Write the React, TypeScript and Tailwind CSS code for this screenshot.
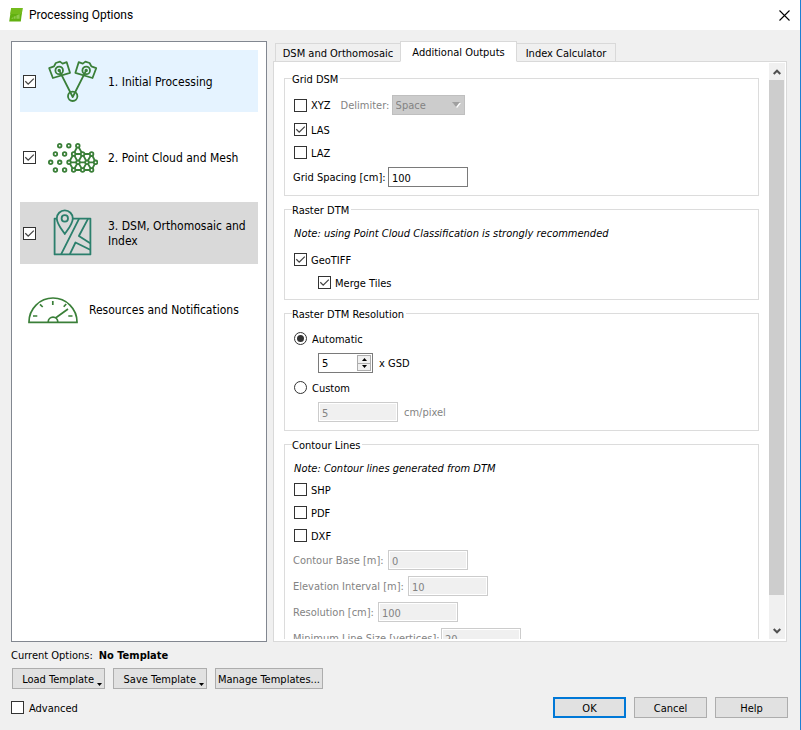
import { useState, type ReactNode } from "react";

function Tick({
  id,
  checked = false,
}: {
  id: string;
  checked?: boolean;
}) {
  return (
    <span className="grid size-[13px] shrink-0 place-items-center">
      <input
        id={id}
        type="checkbox"
        defaultChecked={checked}
        className="peer col-start-1 row-start-1 size-[13px] appearance-none border border-[#333333] bg-white"
      />
      <svg
        viewBox="0 0 13 13"
        aria-hidden="true"
        className="pointer-events-none invisible col-start-1 row-start-1 size-[13px] peer-checked:visible"
      >
        <path d="M2.3 6.3 5.2 9.2 10.8 3.6" fill="none" stroke="#444" strokeWidth="1.3" />
      </svg>
    </span>
  );
}

function CheckRow({ id, text, checked, indent }: { id: string; text: string; checked?: boolean; indent?: boolean }) {
  return (
    <div className={`flex h-[23px] items-center gap-1 ${indent ? "pl-[25px]" : "pl-px"}`}>
      <Tick id={id} checked={checked} />
      <label htmlFor={id} className="pt-0.5">
        {text}
      </label>
    </div>
  );
}

function RadioRow({ id, text, checked }: { id: string; text: string; checked?: boolean }) {
  return (
    <div className="flex h-[23px] items-center gap-[5px] pl-px">
      <span className="grid size-[13px] place-items-center">
        <input
          id={id}
          type="radio"
          name="resolution"
          defaultChecked={checked}
          className="peer col-start-1 row-start-1 size-[13px] appearance-none rounded-full border border-[#333333] bg-white"
        />
        <span className="pointer-events-none invisible col-start-1 row-start-1 size-[7px] rounded-full bg-[#333333] peer-checked:visible" />
      </span>
      <label htmlFor={id} className="pt-0.5">
        {text}
      </label>
    </div>
  );
}

const disabledBox =
  "h-5 w-20 shrink-0 border border-[#cccccc] bg-[#f0f0f0] px-[3px] pt-0.5 text-[#838383] shadow-[inset_0_0_0_1px_#ffffff]";

function DisabledField({ id, text, value, width }: { id: string; text: string; value: string; width: string }) {
  return (
    <div className="flex h-[26px] items-center text-[#838383]">
      <label htmlFor={id} className={`shrink-0 pt-0.5 whitespace-nowrap ${width}`}>
        {text}
      </label>
      <input id={id} type="text" disabled defaultValue={value} className={disabledBox} />
    </div>
  );
}

function Group({ title, children }: { title: string; children: ReactNode }) {
  return (
    <fieldset className="min-w-0 border border-[#dcdcdc] px-2 pt-[7px] pb-[5px]">
      <legend className="-ml-px h-[14px] pr-0.5 leading-[17px]">{title}</legend>
      {children}
    </fieldset>
  );
}

function Note({ children }: { children: ReactNode }) {
  return <p className="flex h-5 items-center pt-0.5 pl-px italic">{children}</p>;
}

function AppLogo() {
  return (
    <svg viewBox="0 0 14 14" className="size-[14px]" aria-hidden="true">
      <path d="M2.2 0H13.6L11.8 13.6H.2Z" fill="#62b010" />
      <path d="M2.2 0H13.6L12.8 6H1.3Z" fill="#74bb1c" />
      <path d="M2 10.8 4.2 9V10.8ZM4.8 10.8V8.4L6.6 8V10.8ZM7.4 10.8V7.4L10.6 6V10.8Z" fill="#8fca4c" />
    </svg>
  );
}

function CamerasIcon() {
  return (
    <svg viewBox="0 0 50 42" className="h-[42px] w-[50px]" fill="none" stroke="#3a7f38" strokeWidth="1.8" strokeLinejoin="round">
      <path d="M1.2 8.2 6 6.4 7.8 3 12 1.6 14.6 3.6 18.7 2.2 22 12.8 4.9 18Z" />
      <path d="M48.2 8.2 43.4 6.4 41.6 3 37.4 1.6 34.8 3.6 30.7 2.2 27.4 12.8 44.5 18Z" />
      <circle cx="11.2" cy="10.4" r="3.8" />
      <circle cx="38.2" cy="10.4" r="3.8" />
      <circle cx="11.2" cy="10.4" r=".8" />
      <circle cx="38.2" cy="10.4" r=".8" />
      <path d="M11.2 10.4 24.7 37 38.2 10.4" />
      <circle cx="24.7" cy="36.3" r="4.7" />
    </svg>
  );
}

const meshDots = [
  [11.7, 3.7], [20.8, 3.7], [29.8, 3.7],
  [7.4, 12], [16.6, 12], [25.6, 12], [34.6, 12], [43.6, 12],
  [2.7, 20.3], [11.7, 20.3], [21, 20.3], [30, 20.3], [39, 20.3], [47.6, 20.3],
  [7.4, 28], [16.6, 28], [25.6, 28], [34.6, 28], [43.6, 28],
];

function MeshIcon() {
  return (
    <svg viewBox="0 0 50 31" className="h-[31px] w-[50px]" fill="none" stroke="#3a7f38" strokeWidth="1.8">
      <path d="M25.6 12 29.8 3.7 34.6 12H25.6L21 20.3 25.6 28H43.6L47.6 20.3 43.6 12H34.6L30 20.3 25.6 12M21 20.3H47.6M25.6 28 30 20.3 34.6 28 39 20.3 43.6 28M34.6 12 39 20.3 43.6 12" />
      {meshDots.map(([x, y]) => (
        <circle key={`${x}-${y}`} cx={x} cy={y} r="1.8" fill="#fff" />
      ))}
    </svg>
  );
}

function MapIcon() {
  return (
    <svg viewBox="0 0 40 48" className="h-12 w-10" fill="none" stroke="#2b7f6c" strokeWidth="1.8" strokeLinejoin="round">
      <path d="M4 9.6H1.6V45.4H37.4V9.6H20" />
      <path d="M11.8 25C8 19.6 3.8 14.4 3.8 9.4A8 8 0 0 1 19.8 9.4C19.8 14.4 15.6 19.6 11.8 25Z" />
      <circle cx="11.8" cy="9.4" r="3.2" />
      <path d="M26 9.8 8.2 45.2M35 9.8 25.9 27 37.2 34.3M16.9 45.2 22.5 33.5 37.2 40.8" />
    </svg>
  );
}

function GaugeIcon() {
  return (
    <svg viewBox="0 0 50 30" className="h-[30px] w-[50px]" fill="none" stroke="#3a7f38" strokeWidth="1.7">
      <path d="M1 28.4V28A24 24 0 0 1 49 28V28.4Z" />
      <path d="M20.2 28A4.8 4.8 0 0 1 29.8 28M27.5 24 40 15M24.8 7V11M12 10.3 14.7 13M35.7 12.8 38.2 10M5 22H9.3M40.3 22H44.5" />
    </svg>
  );
}

function StepItem({
  id,
  text,
  icon,
  tone,
}: {
  id: string;
  text: string;
  icon: ReactNode;
  tone: string;
}) {
  return (
    <li className={`flex h-[62px] items-center pl-[3px] ${tone}`}>
      <Tick id={id} checked />
      <span className="flex w-[72px] shrink-0 justify-center pl-0.5">{icon}</span>
      <label htmlFor={id} className="min-w-0 flex-1 pt-0.5 pr-1">
        {text}
      </label>
    </li>
  );
}

const pushButton = "h-[21px] border border-[#adadad] bg-[#e1e1e1] text-center";

function MenuArrow() {
  return (
    <svg viewBox="0 0 5 3" className="mb-[2px] h-[3px] w-[5px] self-end" aria-hidden="true">
      <path d="M0 0H5L2.5 3Z" fill="#000" />
    </svg>
  );
}

const tabs = [
  { name: "DSM and Orthomosaic", width: "w-[126px]" },
  { name: "Additional Outputs", width: "w-[117px]" },
  { name: "Index Calculator", width: "w-[100px]" },
];

export default function App() {
  const [active, setActive] = useState(1);

  return (
    <div className="flex h-screen flex-col border-r border-[#1b7fd4] bg-[#f0f0f0] font-['DejaVu_Sans_Condensed','DejaVu_Sans',sans-serif] text-[11px] leading-[14px] text-black">
      <header className="flex h-[30px] shrink-0 items-center bg-white pr-[10px] pl-[9px]">
        <AppLogo />
        <h1 className="ml-1.5 flex-1 font-[Roboto,'Open_Sans',sans-serif] text-[12px]">Processing Options</h1>
        <button type="button" aria-label="Close" className="size-[11px]">
          <svg viewBox="0 0 11 11" className="size-[11px]" stroke="#000" strokeWidth="1.1">
            <path d="M.5 .5 10.5 10.5M10.5 .5 .5 10.5" />
          </svg>
        </button>
      </header>

      <main className="flex min-h-0 flex-1 gap-1.5 pt-[11px] pr-[13px] pl-[11px]">
        <nav className="w-64 shrink-0 border border-[#828790] bg-white p-2 text-[12px] leading-[15px]">
          <ul className="flex flex-col gap-[14px]">
            <StepItem id="step-1" text="1. Initial Processing" icon={<CamerasIcon />} tone="bg-[#e5f3ff]" />
            <StepItem id="step-2" text="2. Point Cloud and Mesh" icon={<MeshIcon />} tone="bg-white" />
            <StepItem id="step-3" text="3. DSM, Orthomosaic and Index" icon={<MapIcon />} tone="bg-[#d9d9d9]" />
            <li className="flex h-[62px] items-center gap-[11px] pl-2">
              <GaugeIcon />
              <span className="pt-0.5">Resources and Notifications</span>
            </li>
          </ul>
        </nav>

        <section className="flex min-w-0 flex-1 flex-col">
          <div role="tablist" className="z-10 -mb-px flex h-[21px] shrink-0 items-end pl-0.5">
            {tabs.map((tab, i) => (
              <button
                key={tab.name}
                type="button"
                role="tab"
                aria-selected={active === i}
                onClick={() => setActive(i)}
                className={`-mr-px border border-[#d9d9d9] pt-0.5 whitespace-nowrap ${tab.width} ${
                  active === i ? "z-10 h-[21px] border-b-white bg-white" : "h-[19px] bg-[#f0f0f0]"
                }`}
              >
                {tab.name}
              </button>
            ))}
          </div>

          <div className="flex min-h-0 flex-1 border border-[#d9d9d9] bg-white pt-px pr-px pb-0.5">
            <div className="flex min-w-0 flex-1 flex-col gap-1.5 overflow-hidden px-[10px] pt-2">
              <Group title="Grid DSM">
                <div className="flex h-[26px] items-center gap-1 pl-px">
                  <Tick id="xyz" />
                  <label htmlFor="xyz" className="pt-0.5">
                    XYZ
                  </label>
                  <label htmlFor="delimiter" className="ml-1.5 w-[47px] pt-0.5 text-[#838383]">
                    Delimiter:
                  </label>
                  <span className="grid items-center">
                    <select
                      id="delimiter"
                      disabled
                      className="col-start-1 row-start-1 h-5 w-[73px] appearance-none border border-[#bfbfbf] bg-[#cccccc] px-[3px] pt-0.5 text-[#838383] opacity-100"
                    >
                      <option>Space</option>
                    </select>
                    <svg viewBox="0 0 9 6" className="pointer-events-none col-start-1 row-start-1 mr-1 h-1.5 w-[9px] justify-self-end" aria-hidden="true">
                      <path d="M1 1H9L5 6Z" fill="#fff" />
                      <path d="M0 0H8L4 5Z" fill="#a0a0a0" />
                    </svg>
                  </span>
                </div>
                <CheckRow id="las" text="LAS" checked />
                <CheckRow id="laz" text="LAZ" />
                <div className="flex h-[26px] items-center">
                  <label htmlFor="grid-spacing" className="w-[95px] shrink-0 pt-0.5 whitespace-nowrap">
                    Grid Spacing [cm]:
                  </label>
                  <input id="grid-spacing" type="text" defaultValue="100" className="h-5 w-20 border border-[#7a7a7a] bg-white px-[3px] pt-0.5" />
                </div>
              </Group>

              <Group title="Raster DTM">
                <Note>Note: using Point Cloud Classification is strongly recommended</Note>
                <div className="pt-[5px]">
                  <CheckRow id="geotiff" text="GeoTIFF" checked />
                  <CheckRow id="merge" text="Merge Tiles" checked indent />
                </div>
              </Group>

              <Group title="Raster DTM Resolution">
                <RadioRow id="automatic" text="Automatic" checked />
                <div className="flex h-[26px] items-center gap-1.5 pl-[25px]">
                  <span className="flex h-5 w-[55px] items-center border border-[#7a7a7a] bg-white pr-px">
                    <input id="gsd" type="text" inputMode="numeric" defaultValue="5" className="min-w-0 flex-1 bg-transparent px-[3px] pt-0.5 outline-none" />
                    <span className="flex h-4 w-[14px] shrink-0 flex-col border border-[#adadad] bg-[#f0f0f0]">
                      <button type="button" aria-label="Increase" className="flex flex-1 items-center justify-center">
                        <svg viewBox="0 0 5 3" className="h-[3px] w-[5px]">
                          <path d="M0 3H5L2.5 0Z" />
                        </svg>
                      </button>
                      <button type="button" aria-label="Decrease" className="flex flex-1 items-center justify-center border-t border-[#adadad]">
                        <svg viewBox="0 0 5 3" className="h-[3px] w-[5px]">
                          <path d="M0 0H5L2.5 3Z" />
                        </svg>
                      </button>
                    </span>
                  </span>
                  <label htmlFor="gsd" className="pt-0.5">
                    x GSD
                  </label>
                </div>
                <RadioRow id="custom" text="Custom" />
                <div className="flex h-[26px] items-center gap-1.5 pl-[25px] text-[#838383]">
                  <input id="custom-size" type="text" disabled defaultValue="5" className={disabledBox} />
                  <label htmlFor="custom-size" className="pt-0.5">
                    cm/pixel
                  </label>
                </div>
              </Group>

              <Group title="Contour Lines">
                <Note>Note: Contour lines generated from DTM</Note>
                <CheckRow id="shp" text="SHP" />
                <CheckRow id="pdf" text="PDF" />
                <CheckRow id="dxf" text="DXF" />
                <DisabledField id="contour-base" text="Contour Base [m]:" value="0" width="w-[95px]" />
                <DisabledField id="elevation" text="Elevation Interval [m]:" value="10" width="w-[115px]" />
                <DisabledField id="resolution-cm" text="Resolution [cm]:" value="100" width="w-[85px]" />
                <DisabledField id="min-line" text="Minimum Line Size [vertices]:" value="20" width="w-[148px]" />
              </Group>
            </div>

            <div className="flex w-4 shrink-0 flex-col bg-[#f0f0f0]">
              <button type="button" aria-label="Scroll up" className="flex h-[17px] items-center justify-center">
                <svg viewBox="0 0 8 6" className="h-1.5 w-2" fill="none" stroke="#505050" strokeWidth="2">
                  <path d="M.7 5 4 1.7 7.3 5" />
                </svg>
              </button>
              <div className="min-h-0 flex-1">
                <div className="mr-px h-[95%] bg-[#cdcdcd]" />
              </div>
              <button type="button" aria-label="Scroll down" className="flex h-[17px] items-center justify-center">
                <svg viewBox="0 0 8 6" className="h-1.5 w-2" fill="none" stroke="#505050" strokeWidth="2">
                  <path d="M.7 1 4 4.3 7.3 1" />
                </svg>
              </button>
            </div>
          </div>
        </section>
      </main>

      <footer className="shrink-0 pt-[7px] pr-3 pb-3 pl-[11px]">
        <p className="flex gap-1.5">
          <span>Current Options:</span>
          <strong>No Template</strong>
        </p>
        <div className="mt-[5px] flex gap-2 pl-px">
          <button type="button" className={`${pushButton} flex w-[93px] items-center justify-end gap-[3px] pr-0.5`}>
            <span className="pt-0.5">Load Template</span>
            <MenuArrow />
          </button>
          <button type="button" className={`${pushButton} flex w-[94px] items-center justify-end gap-[3px] pr-0.5`}>
            <span className="pt-0.5">Save Template</span>
            <MenuArrow />
          </button>
          <button type="button" className={`${pushButton} w-[108px] pt-0.5 whitespace-nowrap`}>
            Manage Templates...
          </button>
        </div>
        <div className="mt-2 flex items-center gap-2">
          <div className="flex flex-1 items-center gap-[5px]">
            <Tick id="advanced" />
            <label htmlFor="advanced" className="pt-0.5">
              Advanced
            </label>
          </div>
          <button type="button" className="h-[21px] w-[73px] border-2 border-[#0078d7] bg-[#e1e1e1] pt-0.5">
            OK
          </button>
          <button type="button" className={`${pushButton} w-[73px] pt-0.5`}>
            Cancel
          </button>
          <button type="button" className={`${pushButton} w-[73px] pt-0.5`}>
            Help
          </button>
        </div>
      </footer>
    </div>
  );
}
